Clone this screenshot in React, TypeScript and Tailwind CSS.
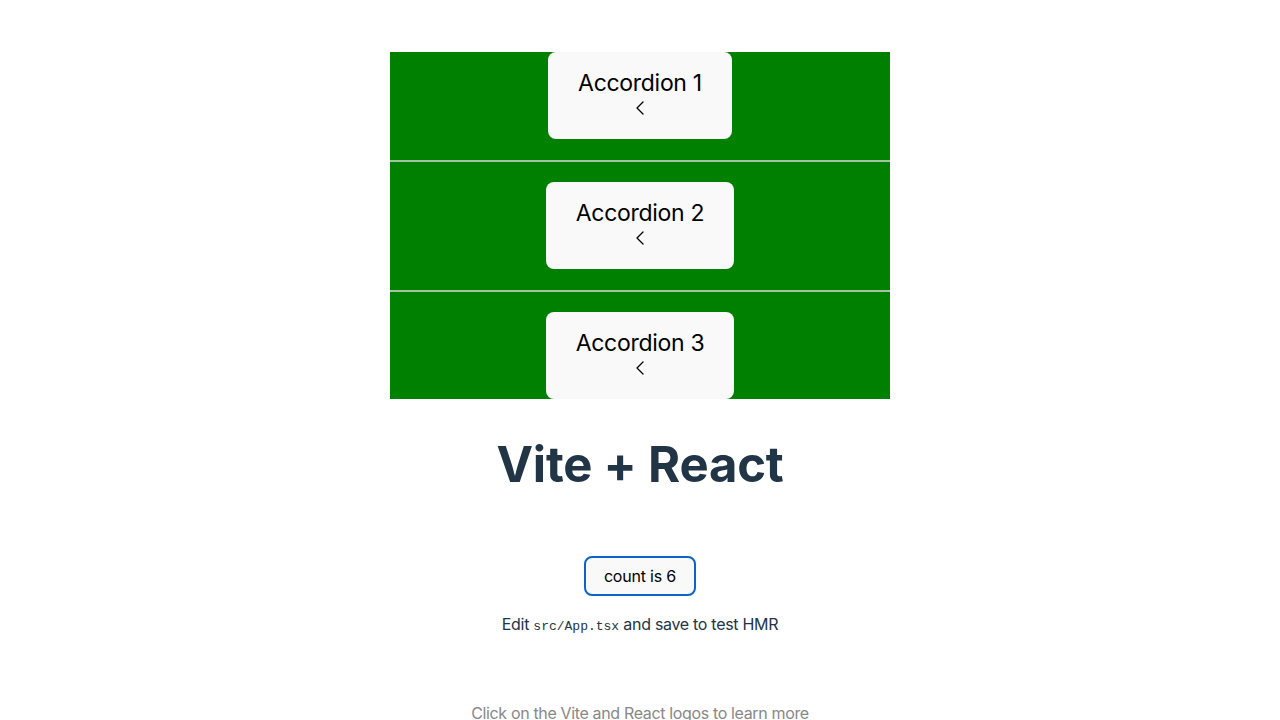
import { useState } from 'react';
import { ChevronLeft } from 'lucide-react';

const ITEMS = ['Accordion 1', 'Accordion 2', 'Accordion 3'];

export default function App() {
  const [count, setCount] = useState(6);

  return (
    <div
      className="min-h-screen bg-white text-center text-[#213547] overflow-hidden"
      style={{ fontFamily: 'Inter, "Noto Sans", sans-serif' }}
    >
      <div className="flex flex-col items-center pt-[52px]">
        <div className="w-[500px] h-[347px] overflow-hidden bg-[#008000]">
          {ITEMS.map((label, i) => (
            <div
              key={label}
              className={`flex justify-center pb-[21px] border-b-2 border-[#a3c4a3] ${
                i === 0 ? 'pt-0' : 'pt-[20px]'
              }`}
            >
              <button className="flex flex-col items-center rounded-lg bg-[#f9f9f9] px-[30px] pt-[17px] h-[87px] text-black">
                <span className="text-[23px] leading-[29px] tracking-[-0.3px]">{label}</span>
                <ChevronLeft className="w-6 h-6 -mt-[2px]" strokeWidth={1.3} />
              </button>
            </div>
          ))}
        </div>

        <h1 className="mt-[39px] text-[49px] leading-[1.1] font-bold tracking-[-0.2px]">Vite + React</h1>

        <div className="mt-[64px] flex flex-col items-center">
          <button
            onClick={() => setCount((c) => c + 1)}
            className="h-[40px] px-[18px] rounded-lg border-2 border-[#0b63cb] bg-[#f9f9f9] text-[16px] font-normal tracking-[-0.2px] text-black"
          >
            count is {count}
          </button>
          <p className="mt-[16px] text-[16px] leading-6 tracking-[-0.3px]">
            Edit <code className="text-[13px] tracking-normal" style={{ fontFamily: '"Liberation Mono", monospace' }}>src/App.tsx</code> and save to test HMR
          </p>
        </div>

        <p className="mt-[62px] text-[16px] leading-6 tracking-[-0.35px] text-[#888]">Click on the Vite and React logos to learn more</p>
      </div>
    </div>
  );
}
